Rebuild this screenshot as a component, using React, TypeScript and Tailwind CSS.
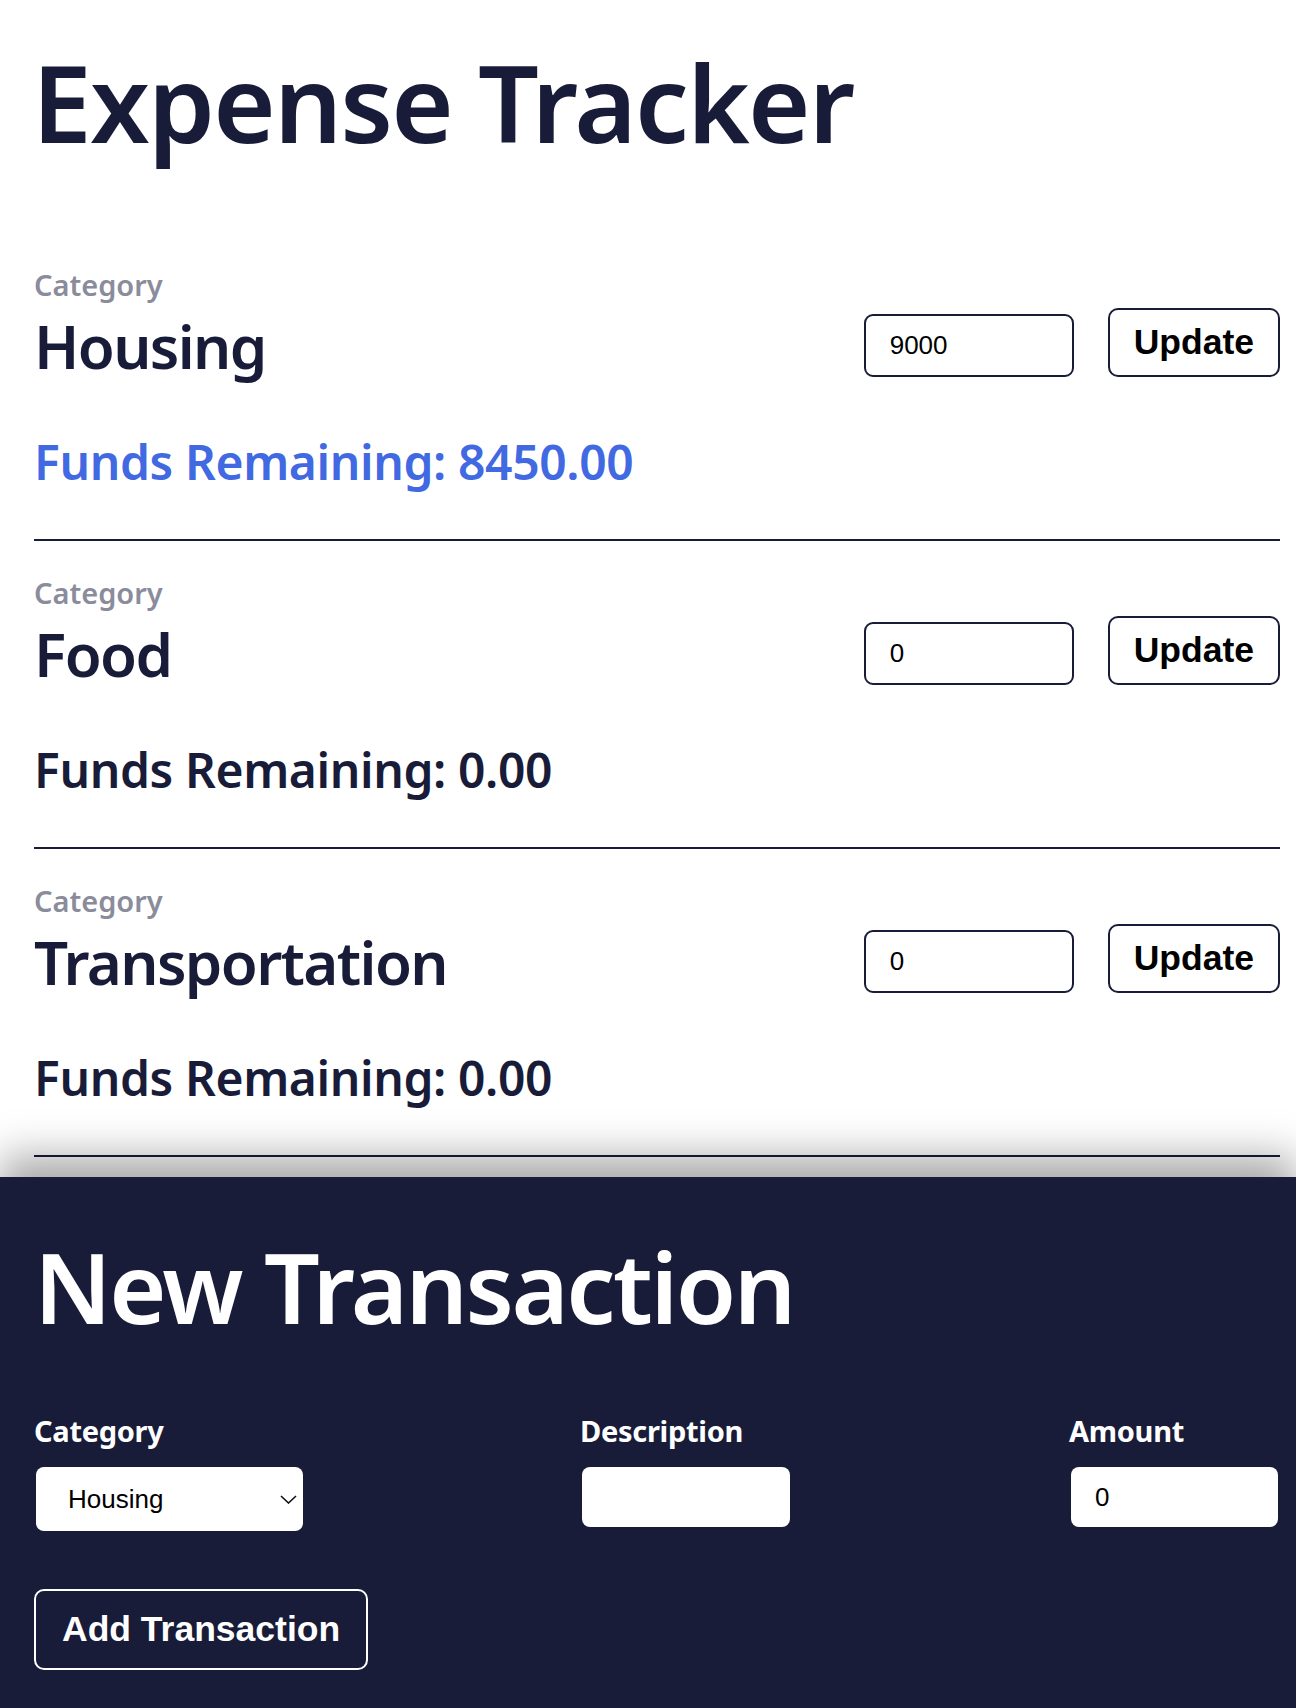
import { useState } from 'react';

const initialCategories = [
  { name: 'Housing', budget: '9000', remaining: 8450, highlight: true },
  { name: 'Food', budget: '0', remaining: 0, highlight: false },
  { name: 'Transportation', budget: '0', remaining: 0, highlight: false },
];

const CategoryRow = ({ name, budget, remaining, highlight }: { name: string; budget: string; remaining: number; highlight: boolean }) => {
  const [value, setValue] = useState(budget);

  return (
    <div className="border-b-2 border-[#181c38] pb-[53px] mb-[37px]">
      <div className="flex items-start justify-between">
        <div className="flex flex-col">
          <span className="text-[29px] leading-none font-semibold text-[#8a8c9c]">Category</span>
          <h2 className="mt-[17px] text-[60px] leading-none font-semibold tracking-[-0.027em] text-[#181c38]">{name}</h2>
        </div>
        {/* budget editor */}
        <div className="mt-[38px] flex items-end gap-[34px]">
          <input
            type="text"
            value={value}
            onChange={(e) => setValue(e.target.value)}
            className="h-[63px] w-[210px] rounded-[9px] border-2 border-[#181c38] bg-white px-[24px] font-['Liberation_Sans',Arial,sans-serif] text-[26px] text-black outline-none"
          />
          <button className="h-[69px] rounded-[10px] border-2 border-[#181c38] bg-white px-[24px] font-['Liberation_Sans',Arial,sans-serif] text-[35.5px] font-bold text-black">
            Update
          </button>
        </div>
      </div>
      <p className={`mt-[61px] text-[48px] leading-none font-semibold tracking-[-0.008em] ${highlight ? 'text-[#4169e1]' : 'text-[#181c38]'}`}>
        Funds Remaining: {remaining.toFixed(2)}
      </p>
    </div>
  );
};

export default function App() {
  const [category, setCategory] = useState('Housing');
  const [description, setDescription] = useState('');
  const [amount, setAmount] = useState('0');

  return (
    <div className="min-h-[1708px] flex flex-col bg-white font-['Noto_Sans',sans-serif]">
      <div className="pl-[34px] pr-[16px] pt-[48px]">
        <h1 className="-ml-[2px] text-[107px] leading-none font-semibold tracking-[-0.017em] text-[#181c38]">Expense Tracker</h1>
        <div className="mt-[115px] -mb-[17px]">
          {initialCategories.map((c) => (
            <CategoryRow key={c.name} {...c} />
          ))}
        </div>
      </div>

      {/* New transaction panel */}
      <div className="flex-1 bg-[#181c38] pl-[34px] pr-[18px] pt-[60px] pb-[38px] shadow-[0_-20px_40px_rgba(0,0,0,0.35)]">
        <h2 className="text-[98px] leading-none font-semibold tracking-[-0.025em] text-white">New Transaction</h2>
        <div className="mt-[81px] flex justify-between">
          <div className="flex flex-col">
            <label className="text-[29px] leading-none font-bold tracking-[-0.01em] text-white">Category</label>
            <div className="relative mt-[22px] ml-[2px]">
              <select
                value={category}
                onChange={(e) => setCategory(e.target.value)}
                className="h-[64px] w-[267px] appearance-none rounded-[8px] bg-white pl-[32px] font-['Liberation_Sans',Arial,sans-serif] text-[26px] text-black outline-none"
              >
                <option>Housing</option>
                <option>Food</option>
                <option>Transportation</option>
              </select>
              <svg className="pointer-events-none absolute right-[6px] top-[28px]" width="17" height="9" viewBox="0 0 17 9" fill="none">
                <path d="M1 1L8.5 8L16 1" stroke="#111" strokeWidth="1.6" />
              </svg>
            </div>
          </div>
          <div className="flex flex-col">
            <label className="-ml-[2px] text-[29px] leading-none font-bold tracking-[-0.01em] text-white">Description</label>
            <input
              type="text"
              value={description}
              onChange={(e) => setDescription(e.target.value)}
              className="mt-[22px] h-[60px] w-[208px] rounded-[8px] bg-white px-[24px] font-['Liberation_Sans',Arial,sans-serif] text-[26px] text-black outline-none"
            />
          </div>
          <div className="flex flex-col">
            <label className="text-[29px] leading-none font-bold tracking-[-0.01em] text-white">Amount</label>
            <input
              type="text"
              value={amount}
              onChange={(e) => setAmount(e.target.value)}
              className="mt-[22px] ml-[2px] h-[60px] w-[207px] rounded-[8px] bg-white px-[24px] font-['Liberation_Sans',Arial,sans-serif] text-[26px] text-black outline-none"
            />
          </div>
        </div>
        <button className="mt-[58px] h-[81px] rounded-[10px] border-2 border-white px-[26px] font-['Liberation_Sans',Arial,sans-serif] text-[35.5px] font-bold text-white">
          Add Transaction
        </button>
      </div>
    </div>
  );
}
